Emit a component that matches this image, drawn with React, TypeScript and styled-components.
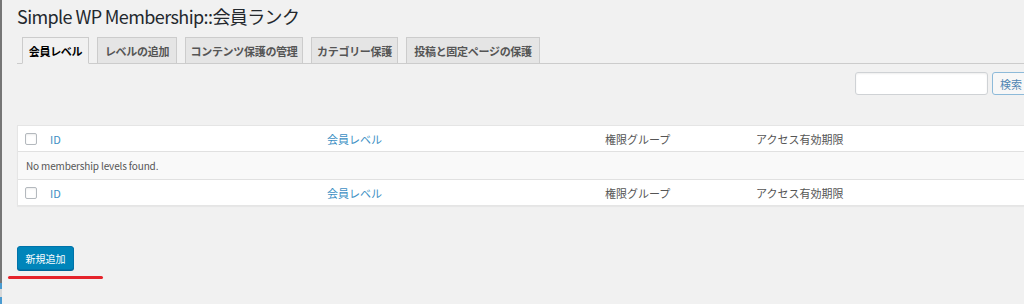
import styled, { createGlobalStyle } from "styled-components";

const GlobalStyle = createGlobalStyle`
  html, body {
    margin: 0;
    padding: 0;
    background: #f1f1f1;
    overflow: hidden;
  }
  body {
    font-family: "Noto Sans CJK JP", "Noto Sans", sans-serif;
    color: #23282d;
  }
`;

const Page = styled.div`
  display: flex;
  height: 304px;
  width: 1060px;
`;

const Edge = styled.div`
  width: 2px;
  display: flex;
  flex-direction: column;
  flex-shrink: 0;
`;

const EdgePart = styled.div<{ $h: number; $color: string }>`
  height: ${(p) => p.$h}px;
  background: ${(p) => p.$color};
`;

const Wrap = styled.div`
  flex: 1;
  padding-left: 15px;
  display: flex;
  flex-direction: column;
`;

const Title = styled.h1`
  margin: 0;
  padding-top: 3px;
  height: 34px;
  box-sizing: border-box;
  font-size: 18px;
  font-weight: 400;
  letter-spacing: -0.6px;
  line-height: 26px;
  color: #23282d;
`;

const TabBar = styled.nav`
  display: flex;
  gap: 8px;
  padding-left: 5px;
  margin-top: 3px;
  border-bottom: 1px solid #ccc;
  height: 26px;
`;

const Tab = styled.div<{ $w: number; $active?: boolean }>`
  width: ${(p) => p.$w}px;
  box-sizing: border-box;
  border: 1px solid #ccc;
  border-bottom: ${(p) => (p.$active ? "1px solid #f1f1f1" : "none")};
  background: ${(p) => (p.$active ? "#f1f1f1" : "#e5e5e5")};
  color: ${(p) => (p.$active ? "#000" : "#555")};
  font-size: 11px;
  font-weight: 700;
  display: flex;
  align-items: center;
  justify-content: center;
  height: ${(p) => (p.$active ? 27 : 26)}px;
  letter-spacing: -0.3px;
`;

const SearchRow = styled.div`
  display: flex;
  justify-content: flex-end;
  gap: 4px;
  margin-top: 8px;
  padding-right: 24px;
`;

const SearchInput = styled.input`
  width: 133px;
  height: 23px;
  box-sizing: border-box;
  border: 1px solid #cfd2d5;
  border-radius: 3px;
  background: #fff;
  box-shadow: inset 0 1px 2px rgba(0, 0, 0, 0.07);
  outline: none;
`;

const SearchButton = styled.button`
  width: 44px;
  height: 23px;
  box-sizing: border-box;
  border: 1px solid #8dbad9;
  border-radius: 3px;
  background: #f7f7f7;
  color: #4f86b3;
  font-size: 11px;
  font-family: "Noto Sans CJK JP", sans-serif;
  padding: 0 0 0 7px;
  text-align: left;
`;

const Table = styled.div`
  margin-top: 30px;
  width: 1040px;
  background: #fff;
  border: 1px solid #e5e5e5;
  box-shadow: 0 1px 1px rgba(0, 0, 0, 0.04);
`;

const Row = styled.div<{ $bottom?: boolean }>`
  display: grid;
  grid-template-columns: 32px 277px 278px 151px 1fr;
  align-items: center;
  height: 25px;
  border-top: ${(p) => (p.$bottom ? "1px solid #e1e1e1" : "none")};
  border-bottom: ${(p) => (p.$bottom ? "none" : "1px solid #e1e1e1")};
  font-size: 11px;
`;

const EmptyRow = styled.div`
  height: 27px;
  background: #f9f9f9;
  display: flex;
  align-items: center;
  padding-left: 8px;
  font-size: 10px;
  letter-spacing: -0.15px;
  color: #555;
`;

const Check = styled.span`
  width: 12px;
  height: 12px;
  box-sizing: border-box;
  margin-left: 7px;
  border: 1px solid #b4b9be;
  border-radius: 2px;
  background: #fff;
  box-shadow: inset 0 1px 2px rgba(0, 0, 0, 0.08);
`;

const SortLink = styled.span`
  color: #3d8fc4;
`;

const HeadText = styled.span`
  color: #555;
`;

const AddButton = styled.button`
  margin-top: 40px;
  width: 57px;
  height: 24px;
  background: #0085ba;
  border: 1px solid #0073aa;
  border-radius: 3px;
  color: #fff;
  font-size: 10px;
  font-family: "Noto Sans CJK JP", sans-serif;
  padding: 0;
  box-shadow: 0 1px 0 #006799;
  align-self: flex-start;
`;

const Underline = styled.div`
  margin-top: 6px;
  margin-left: -9px;
  width: 95px;
  height: 3px;
  border-radius: 2px;
  background: #e5232b;
`;

const tabs = [
  { label: "会員レベル", w: 67, active: true },
  { label: "レベルの追加", w: 80 },
  { label: "コンテンツ保護の管理", w: 118 },
  { label: "カテゴリー保護", w: 87 },
  { label: "投稿と固定ページの保護", w: 134 },
];

const HeaderCells = () => (
  <>
    <Check />
    <SortLink>ID</SortLink>
    <SortLink>会員レベル</SortLink>
    <HeadText>権限グループ</HeadText>
    <HeadText>アクセス有効期限</HeadText>
  </>
);

export default function App() {
  return (
    <>
      <GlobalStyle />
      <Page>
        <Edge>
          <EdgePart $h={283} $color="#767676" />
          <EdgePart $h={6} $color="#4a9bd1" />
          <EdgePart $h={8} $color="#d9d9d9" />
          <EdgePart $h={7} $color="#4a9bd1" />
        </Edge>
        <Wrap>
          <Title>Simple WP Membership::会員ランク</Title>
          <TabBar>
            {tabs.map((t) => (
              <Tab key={t.label} $w={t.w} $active={t.active}>
                {t.label}
              </Tab>
            ))}
          </TabBar>
          <SearchRow>
            <SearchInput />
            <SearchButton>検索</SearchButton>
          </SearchRow>
          <Table>
            <Row>
              <HeaderCells />
            </Row>
            <EmptyRow>No membership levels found.</EmptyRow>
            <Row $bottom>
              <HeaderCells />
            </Row>
          </Table>
          <AddButton>新規追加</AddButton>
          <Underline />
        </Wrap>
      </Page>
    </>
  );
}
